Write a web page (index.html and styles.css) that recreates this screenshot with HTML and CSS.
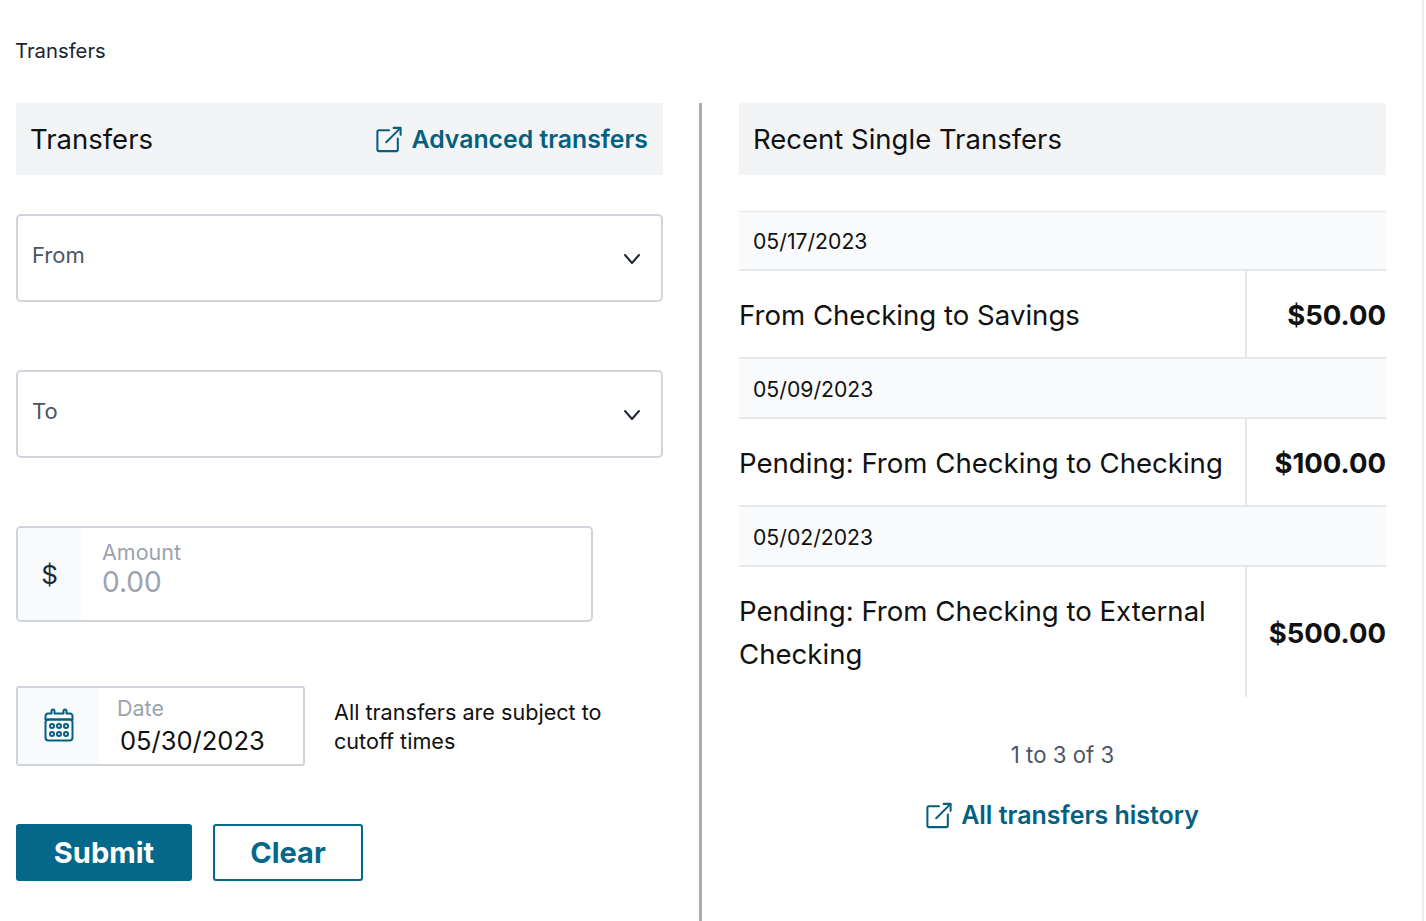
FILE: index.html
```html
<!DOCTYPE html>
<html lang="en">
<head>
  <meta charset="UTF-8">
  <meta name="viewport" content="width=device-width, initial-scale=1.0">
  <title>Transfers</title>
  <link rel="stylesheet" href="styles.css">
</head>
<body>
  <div class="page">
    <p class="breadcrumb">Transfers</p>

    <div class="columns">
      <section class="col-left">
        <div class="panel-head">
          <h2>Transfers</h2>
          <a class="ext-link" href="#">
            <svg class="ext-icon" viewBox="0 0 28 28" fill="none" stroke="currentColor" stroke-width="2.200" stroke-linecap="round" stroke-linejoin="round">
              <path d="M14 4H3a1.500 1.500 0 0 0-1.500 1.500V25A1.500 1.500 0 0 0 3 26.500h19a1.500 1.500 0 0 0 1.500-1.500V13"/>
              <path d="M11 17 26 2"/>
              <path d="M19 1.500h7.500V9"/>
            </svg>
            Advanced transfers
          </a>
        </div>

        <div class="select-box select-from">
          <span>From</span>
          <svg class="chevron" viewBox="0 0 18 12" fill="none" stroke="currentColor" stroke-width="2" stroke-linecap="round" stroke-linejoin="round"><path d="M2 2l7 8 7-8"/></svg>
        </div>

        <div class="select-box select-to">
          <span>To</span>
          <svg class="chevron" viewBox="0 0 18 12" fill="none" stroke="currentColor" stroke-width="2" stroke-linecap="round" stroke-linejoin="round"><path d="M2 2l7 8 7-8"/></svg>
        </div>

        <div class="amount-box">
          <div class="addon amount-addon">$</div>
          <div class="field">
            <label>Amount</label>
            <span class="placeholder">0.00</span>
          </div>
        </div>

        <div class="date-row">
          <div class="date-box">
            <div class="addon date-addon">
              <svg class="cal-icon" viewBox="0 0 30 34" fill="none" stroke="currentColor" stroke-width="2" stroke-linejoin="round">
                <path d="M1.500 11.500V8a2.500 2.500 0 0 1 2.500-2.500h3.500V3a1.500 1.500 0 0 1 3 0v2.500h9V3a1.500 1.500 0 0 1 3 0v2.500H26A2.500 2.500 0 0 1 28.500 8v3.500z"/>
                <rect x="1.500" y="11.500" width="27" height="21" rx="3"/>
                <circle cx="8" cy="18" r="2"/><circle cx="15" cy="18" r="2"/><circle cx="22" cy="18" r="2"/>
                <circle cx="8" cy="26" r="2"/><circle cx="15" cy="26" r="2"/><circle cx="22" cy="26" r="2"/>
              </svg>
            </div>
            <div class="date-field">
              <label>Date</label>
              <span class="date-value">05/30/2023</span>
            </div>
          </div>
          <p class="cutoff">All transfers are subject to cutoff times</p>
        </div>

        <div class="actions">
          <button class="btn btn-primary">Submit</button>
          <button class="btn btn-outline">Clear</button>
        </div>
      </section>

      <section class="col-right">
        <div class="panel-head">
          <h2>Recent Single Transfers</h2>
        </div>

        <div class="list">
          <div class="date-head first">05/17/2023</div>
          <div class="tr-row">
            <div class="tr-name">From Checking to Savings</div>
            <div class="tr-amount">$50.00</div>
          </div>
          <div class="date-head">05/09/2023</div>
          <div class="tr-row">
            <div class="tr-name">Pending: From Checking to Checking</div>
            <div class="tr-amount">$100.00</div>
          </div>
          <div class="date-head">05/02/2023</div>
          <div class="tr-row last">
            <div class="tr-name">Pending: From Checking to External Checking</div>
            <div class="tr-amount">$500.00</div>
          </div>
        </div>

        <p class="count">1 to 3 of 3</p>
        <div class="history">
          <a class="ext-link" href="#">
            <svg class="ext-icon" viewBox="0 0 28 28" fill="none" stroke="currentColor" stroke-width="2.200" stroke-linecap="round" stroke-linejoin="round">
              <path d="M14 4H3a1.500 1.500 0 0 0-1.500 1.500V25A1.500 1.500 0 0 0 3 26.500h19a1.500 1.500 0 0 0 1.500-1.500V13"/>
              <path d="M11 17 26 2"/>
              <path d="M19 1.500h7.500V9"/>
            </svg>
            All transfers history
          </a>
        </div>
      </section>
    </div>
  </div>
</body>
</html>
```

FILE: styles.css
```css
* {
  box-sizing: border-box;
}

html,
body {
  height: 100%;
}

body {
  margin: 0;
  font-family: Inter, "Liberation Sans", sans-serif;
  background: #fff;
  color: #111;
  overflow: hidden;
}

.page {
  width: 1424px;
  height: 921px;
  padding: 0 36px 0 16px;
  border-right: 2px solid #ececee;
}

.breadcrumb {
  margin: 0 0 0 -1px;
  height: 103px;
  padding-top: 39px;
  font-size: 20.300px;
  line-height: 24px;
  color: #1a2433;
}

.columns {
  display: flex;
  height: 818px;
}

.col-left {
  width: 647px;
  flex: none;
}

.col-right {
  position: relative;
  width: 647px;
  flex: none;
  margin-left: 76px;
}

.col-right::before {
  content: "";
  position: absolute;
  left: -40px;
  top: 0;
  bottom: 0;
  width: 3px;
  background: #a9abae;
}

.panel-head {
  display: flex;
  align-items: center;
  justify-content: space-between;
  height: 72px;
  padding: 0 15px 0 14px;
  background: #f3f4f6;
}

.panel-head h2 {
  margin: 0;
  font-size: 27.500px;
  font-weight: 400;
  color: #111;
}

.ext-link {
  display: inline-flex;
  align-items: center;
  gap: 9px;
  font-size: 24.800px;
  font-weight: 600;
  color: #05607f;
  text-decoration: none;
}

.ext-icon {
  width: 26px;
  height: 27px;
}

.select-box {
  display: flex;
  justify-content: space-between;
  width: 647px;
  height: 88px;
  padding: 26px 20px 0 14px;
  border: 2px solid #d1d5db;
  border-radius: 5px;
  font-size: 22px;
  line-height: 26px;
  color: #4b5563;
}

.select-from {
  margin-top: 39px;
}

.select-to {
  margin-top: 68px;
}

.chevron {
  width: 18px;
  height: 12px;
  margin-top: 11px;
  color: #1f2937;
}

.amount-box {
  display: flex;
  width: 577px;
  height: 96px;
  margin-top: 68px;
  border: 2px solid #d1d5db;
  border-radius: 5px;
  overflow: hidden;
}

.addon {
  display: flex;
  align-items: center;
  justify-content: center;
  background: #f9fafb;
}

.amount-addon {
  width: 63px;
  font-size: 26px;
  color: #1f2937;
}

.field {
  padding: 11px 0 0 21px;
}

.field label,
.date-field label {
  display: block;
  font-size: 21.500px;
  line-height: 26px;
  color: #9ca3af;
}

.placeholder {
  display: block;
  font-size: 28px;
  line-height: 30px;
  margin-top: 2px;
  color: #9ca3af;
}

.date-row {
  display: flex;
  margin-top: 64px;
}

.date-box {
  display: flex;
  width: 289px;
  height: 80px;
  border: 2px solid #d1d5db;
  border-radius: 3px;
  overflow: hidden;
}

.date-addon {
  width: 81px;
}

.cal-icon {
  width: 30px;
  height: 34px;
  margin-top: -2px;
  color: #05607f;
}

.date-field {
  padding: 7px 0 0 18px;
}

.date-value {
  display: block;
  margin: 4px 0 0 3px;
  font-size: 25.500px;
  line-height: 32px;
  color: #111;
}

.cutoff {
  width: 310px;
  margin: 12px 0 0 29px;
  font-size: 21.600px;
  line-height: 29px;
  color: #111;
}

.actions {
  display: flex;
  gap: 21px;
  margin-top: 58px;
}

.btn {
  height: 57px;
  border-radius: 3px;
  font-family: inherit;
  font-size: 29px;
  font-weight: 700;
}

.btn-primary {
  width: 176px;
  border: none;
  background: #05688a;
  color: #fff;
}

.btn-outline {
  width: 150px;
  border: 2px solid #05688a;
  background: #fff;
  color: #05688a;
}

.list {
  margin-top: 36px;
}

.date-head {
  height: 60px;
  padding: 16px 0 0 14px;
  background: #f9fafb;
  border-bottom: 2px solid #e5e7eb;
  font-size: 21.200px;
  line-height: 28px;
  color: #111;
}

.date-head.first {
  padding-top: 15px;
  border-top: 1px solid #e5e7eb;
}

.tr-row {
  display: flex;
  min-height: 88px;
  border-bottom: 2px solid #e5e7eb;
}

.tr-row.last {
  min-height: 130px;
  border-bottom: none;
}

.tr-name {
  display: flex;
  align-items: center;
  width: 508px;
  padding: 2px 16px 0 0;
  border-right: 2px solid #e5e7eb;
  font-size: 27.600px;
  line-height: 43px;
  color: #111;
}

.tr-amount {
  display: flex;
  flex: 1;
  align-items: center;
  justify-content: flex-end;
  padding-top: 1px;
  font-size: 27.500px;
  font-weight: 700;
  color: #111;
}

.count {
  margin: 44px 0 0;
  text-align: center;
  font-size: 22.200px;
  line-height: 28px;
  color: #4b5563;
}

.history {
  margin-top: 31px;
  text-align: center;
}

.history .ext-link {
  font-size: 25px;
}
```
